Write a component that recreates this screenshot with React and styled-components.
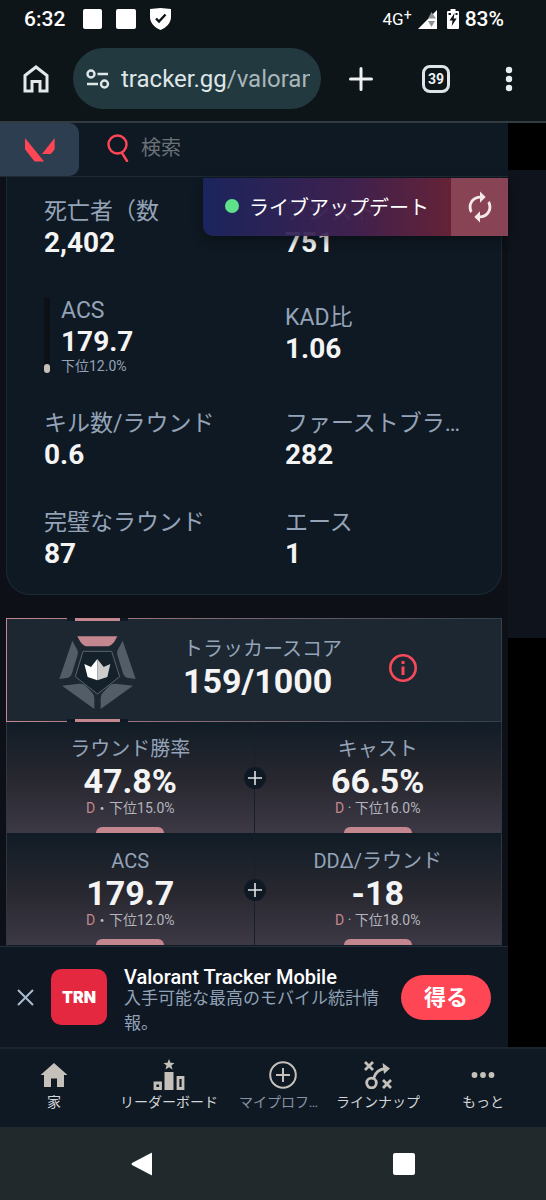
import React from "react";
import styled, { createGlobalStyle } from 'styled-components';
import { MdAutorenew } from 'react-icons/md';

const stats = [
  { label: '死亡者（数', value: '2,402' },
  { label: 'アシスト', value: '751' },
  { label: 'ACS', value: '179.7', rank: '下位12.0%', percent: 12 },
  { label: 'KAD比', value: '1.06' },
  { label: 'キル数/ラウンド', value: '0.6' },
  { label: 'ファーストブラッド', value: '282' },
  { label: '完璧なラウンド', value: '87' },
  { label: 'エース', value: '1' },
];

const scoreRows = [
  [
    { label: 'ラウンド勝率', value: '47.8%', dot: '・', rank: '下位15.0%' },
    { label: 'キャスト', value: '66.5%', dot: ' · ', rank: '下位16.0%' },
  ],
  [
    { label: 'ACS', value: '179.7', dot: '・', rank: '下位12.0%' },
    { label: 'DDΔ/ラウンド', value: '-18', dot: ' · ', rank: '下位18.0%' },
  ],
];

function StatusBar(){
  return(
    <Status>
      <StatusGroup $gap={14}>
        <StatusText>6:32</StatusText>
        <svg width="53" height="20" viewBox="0 0 53 20" fill="#fff">
          <rect x="0" y="0" width="19" height="20" rx="2" />
          <rect x="33" y="0" width="20" height="20" rx="2" />
        </svg>
        <svg width="21" height="22" viewBox="0 0 21 22">
          <path d="M10.5 0L21 1V9C21 15 16 20 10.500 22C5 20 0 15 0 9V1Z" fill="#fff" />
          <path d="M6 10.500L9 13.500L15.500 6.500" fill="none" stroke="#0d1518" strokeWidth="2.400" />
        </svg>
      </StatusGroup>
      <StatusGroup $gap={6}>
        <Network>4G<sup>+</sup></Network>
        <svg width="19" height="19" viewBox="0 0 19 19">
          <path d="M19 0V19H0Z" fill="#fff" />
          <path d="M13.500 2L18 8.500H10Z" fill="#8d9193" />
          <path d="M10 11H17L13.500 17Z" fill="#8d9193" />
        </svg>
        <BatteryIcon width="12" height="20" viewBox="0 0 12 20">
          <path d="M3.500 0H8.500V2H11A1 1 0 0 1 12 3V19A1 1 0 0 1 11 20H1A1 1 0 0 1 0 19V3A1 1 0 0 1 1 2H3.500Z" fill="#fff" />
          <path d="M7.500 4L2.500 11.500H5.500L4.700 17L9.700 9.500H6.700Z" fill="#0d1518" />
          <path d="M1.500 4H4V6H1.500ZM8.500 4H10.500V6H8.500Z" fill="#0d1518" />
        </BatteryIcon>
        <StatusText>83%</StatusText>
      </StatusGroup>
    </Status>
  )
}

function BrowserBar(){
  return(
    <Browser>
      <PlainButton aria-label="ホーム">
        <svg width="26" height="28" viewBox="0 0 26 28" fill="none" stroke="#e3e8ea" strokeWidth="3">
          <path d="M2 10.500L13 2L24 10.500V26H17V16.500H9V26H2Z" />
        </svg>
      </PlainButton>
      <Address>
        <svg width="24" height="20" viewBox="0 0 24 20" fill="none" stroke="#dfe6e8" strokeWidth="2.400">
          <circle cx="5" cy="5" r="3.500" />
          <path d="M11.500 5H22M1 15H12" />
          <circle cx="18.500" cy="15" r="3.500" />
        </svg>
        <Url>tracker.gg<UrlPath>/valorant</UrlPath></Url>
      </Address>
      <PlainButton aria-label="新しいタブ">
        <svg width="24" height="24" viewBox="0 0 24 24" stroke="#eef1f2" strokeWidth="3" strokeLinecap="round">
          <path d="M12 1.500V22.500M1.500 12H22.500" />
        </svg>
      </PlainButton>
      <TabCount>39</TabCount>
      <PlainButton aria-label="メニュー">
        <svg width="8" height="26" viewBox="0 0 8 26" fill="#e9edef">
          <circle cx="4" cy="4" r="3.200" />
          <circle cx="4" cy="13" r="3.200" />
          <circle cx="4" cy="22" r="3.200" />
        </svg>
      </PlainButton>
    </Browser>
  )
}

function SiteHeader(){
  return(
    <Header>
      <GameTab href="#valorant" aria-label="Valorant">
        <svg width="30" height="24" viewBox="0 0 88 70" fill="#ff4655">
          <path d="M0 0L56 69H31Q29 69 27 67L1 34Q0 33 0 31Z" />
          <path d="M87 0V31Q87 33 86 34L77 45Q75 47 73 47H50Z" />
        </svg>
      </GameTab>
      <Search>
        <svg width="22" height="28" viewBox="0 0 22 28" fill="none" stroke="#ff4655" strokeWidth="2.400" strokeLinecap="round">
          <circle cx="10.500" cy="10.500" r="9" />
          <path d="M15 19L20 27" />
        </svg>
        <input type="search" placeholder="検索" aria-label="検索" />
      </Search>
    </Header>
  )
}

function Stat({ stat }){
  return(
    <StatItem>
      {stat.rank && (
        <Track><TrackFill style={{ height: `${stat.percent}%` }} /></Track>
      )}
      <StatBody>
        <StatLabel>{stat.label}</StatLabel>
        <StatValue>{stat.value}</StatValue>
        {stat.rank && <StatRank>{stat.rank}</StatRank>}
      </StatBody>
    </StatItem>
  )
}

function ScoreBadge(){
  return(
    <svg width="77" height="82" viewBox="0 -27 229 246">
      <path d="M54 1H174L165 17Q154 31 142 31H86Q72 31 63 17Z" fill="#c4868f" />
      <g fill="#535d68">
        <path d="M39 14L54 42Q57 48 55 56L38 112Q34 124 22 126L0 129Z" />
        <path d="M190 14L175 42Q172 48 174 56L191 112Q195 124 207 126L229 129Z" />
        <path d="M8 149L60 143Q74 142 82 152L100 172Q105 178 105 186V219Z" />
        <path d="M221 149L169 143Q155 142 147 152L129 172Q124 178 124 186V219Z" />
      </g>
      <path d="M71 46H157L181 122L114.500 174L48 122Z" fill="#14202a" stroke="#596470" strokeWidth="3" />
      <path d="M75 84L95 93L114 69V133L85 123Z" fill="#fff" />
      <path d="M153 84L133 93L114 69V133L144 123Z" fill="#ccc" />
    </svg>
  )
}

function ScorePanel(){
  return(
    <Panel>
      <Notch $top />
      <ScoreBadge />
      <div>
        <TileLabel>トラッカースコア</TileLabel>
        <TileValue>159/1000</TileValue>
      </div>
      <PlainButton aria-label="情報">
        <svg width="28" height="28" viewBox="0 0 28 28" fill="none" stroke="#f8495a">
          <circle cx="14" cy="14" r="12.700" strokeWidth="2.600" />
          <path d="M14 12.500V21M14 7V10" strokeWidth="3" />
        </svg>
      </PlainButton>
      <Notch />
    </Panel>
  )
}

function TileRow({ tiles }){
  return(
    <Tiles>
      {tiles.map((tile)=>(
        <Tile key={tile.label}>
          <TileLabel>{tile.label}</TileLabel>
          <TileValue>{tile.value}</TileValue>
          <TileRank><b>D</b>{tile.dot}{tile.rank}</TileRank>
        </Tile>
      ))}
      <PlusMark>
        <svg width="14" height="14" viewBox="0 0 14 14" stroke="#e2e4e6" strokeWidth="1.600">
          <path d="M7 0V14M0 7H14" />
        </svg>
      </PlusMark>
    </Tiles>
  )
}

function Promo(){
  return(
    <PromoBar>
      <PlainButton aria-label="閉じる">
        <svg width="17" height="17" viewBox="0 0 17 17" stroke="#a9bccd" strokeWidth="2">
          <path d="M1 1L16 16M16 1L1 16" />
        </svg>
      </PlainButton>
      <AppLogo>TRN</AppLogo>
      <PromoText>
        <h2>Valorant Tracker Mobile</h2>
        <p>入手可能な最高のモバイル統計情報。</p>
      </PromoText>
      <GetButton>得る</GetButton>
    </PromoBar>
  )
}

const tabs = [
  {
    label: '家',
    icon: (
      <svg width="28" height="28" viewBox="0 0 28 28" fill="#c5c1ba">
        <path d="M14 2L27.500 14H24V26H17V17.500H11V26H4V14H0.500Z" />
      </svg>
    ),
  },
  {
    label: 'リーダーボード',
    icon: (
      <svg width="32" height="32" viewBox="0 0 32 32">
        <path d="M16 0L17.500 3.800L21.500 4L18.400 6.600L19.500 10.500L16 8.300L12.500 10.500L13.600 6.600L10.500 4L14.500 3.800Z" fill="#c5c1ba" />
        <path d="M11.500 13H20.500V31H11.500Z" fill="#c5c1ba" />
        <path d="M2 24H7.500V29.500H2ZM25 18.500H30V29.500H25Z" fill="none" stroke="#c5c1ba" strokeWidth="2.800" />
      </svg>
    ),
  },
  {
    label: 'マイプロフィール',
    dim: true,
    icon: (
      <svg width="28" height="28" viewBox="0 0 28 28" fill="none" stroke="#c5c1ba" strokeWidth="2">
        <circle cx="14" cy="14" r="12.800" />
        <path d="M14 7V21M7 14H21" />
      </svg>
    ),
  },
  {
    label: 'ラインナップ',
    icon: (
      <svg width="28" height="28" viewBox="0 0 28 28" fill="none" stroke="#c5c1ba" strokeWidth="2.800">
        <path d="M1 1L9 9M9 1L1 9M19 19L27 27M27 19L19 27" />
        <circle cx="7.500" cy="22" r="4.800" />
        <path d="M9.500 17.500C11 12 15 8 22 7.500" />
        <path d="M18.500 2L26 7.500L20 13Z" fill="#c5c1ba" stroke="none" />
      </svg>
    ),
  },
  {
    label: 'もっと',
    icon: (
      <svg width="24" height="28" viewBox="0 0 24 28" fill="#c5c1ba">
        <circle cx="3.500" cy="14" r="2.900" />
        <circle cx="12" cy="14" r="2.900" />
        <circle cx="20.500" cy="14" r="2.900" />
      </svg>
    ),
  },
];

function App(){
  return(
    <Page>
      <GlobalStyle />
      <StatusBar />
      <BrowserBar />
      <Viewport>
        <Site>
          <SiteHeader />
          <Content>
            <LiveUpdate>
              <LiveText>ライブアップデート</LiveText>
              <LiveRefresh aria-label="更新"><MdAutorenew size={34} /></LiveRefresh>
            </LiveUpdate>
            <StatsCard>
              {stats.map((stat)=>(
                <Stat key={stat.label} stat={stat} />
              ))}
            </StatsCard>
            <ScoreCard>
              <ScorePanel />
              {scoreRows.map((row, index)=>(
                <TileRow key={index} tiles={row} />
              ))}
            </ScoreCard>
          </Content>
          <Promo />
        </Site>
      </Viewport>
      <TabBar>
        {tabs.map((tab)=>(
          <TabLink key={tab.label} href="#" $dim={tab.dim}>
            <TabIcon>{tab.icon}</TabIcon>
            <span>{tab.label}</span>
          </TabLink>
        ))}
      </TabBar>
      <SystemNav>
        <PlainButton aria-label="戻る">
          <svg width="22" height="24" viewBox="0 0 22 24" fill="#fff">
            <path d="M20 1Q21 0 21 2V22Q21 24 20 23L1 13Q0 12 1 11Z" />
          </svg>
        </PlainButton>
        <PlainButton aria-label="最近のアプリ">
          <svg width="22" height="22" viewBox="0 0 22 22" fill="#fff">
            <rect width="22" height="22" rx="2" />
          </svg>
        </PlainButton>
      </SystemNav>
    </Page>
  )
}

export default App;

const GlobalStyle = createGlobalStyle`
  *{
    box-sizing: border-box;
  }

  body{
    margin: 0;
    background: #0d1518;
    font-family: Roboto, "Noto Sans CJK JP", sans-serif;
    color: #fff;
  }

  svg{
    display: block;
    flex-shrink: 0;
  }

  h2, p{
    margin: 0;
  }
`

const Page = styled.div`
  display: flex;
  flex-direction: column;
  min-height: 100vh;
`

const PlainButton = styled.button`
  padding: 0;
  border: none;
  background: transparent;
  cursor: pointer;
`

const Status = styled.header`
  display: flex;
  justify-content: space-between;
  align-items: center;
  height: 38px;
  padding: 0 42px 0 24px;
`

const StatusGroup = styled.div`
  display: flex;
  align-items: center;
  gap: ${props => props.$gap}px;
`

const StatusText = styled.span`
  font-size: 21px;
  font-weight: 500;

  &:first-child{
    margin-right: 4px;
  }
`

const Network = styled.span`
  display: flex;
  align-items: flex-start;
  font-size: 17px;
  line-height: 20px;

  sup{
    font-size: 14px;
    line-height: 12px;
  }
`

const BatteryIcon = styled.svg`
  margin-left: 4px;
`

const Browser = styled.div`
  display: flex;
  align-items: center;
  height: 85px;
  padding: 0 33px 2px 23px;
  border-bottom: 2px solid #323b3f;
`

const Address = styled.div`
  display: flex;
  flex: 1;
  align-items: center;
  gap: 11px;
  min-width: 0;
  height: 61px;
  margin: 0 28px 0 24px;
  padding: 0 11px 0 13px;
  border-radius: 31px;
  background: #22393f;
`

const Url = styled.span`
  flex: 1;
  overflow: hidden;
  font-size: 24px;
  line-height: 34px;
  white-space: nowrap;
  color: #dfe6e8;
`

const UrlPath = styled.span`
  color: #a9b6ba;
`

const TabCount = styled.button`
  width: 28px;
  height: 28px;
  margin: 0 55px 0 49px;
  padding: 0;
  border: 3px solid #dfe4ea;
  border-radius: 8px;
  background: transparent;
  font-family: inherit;
  font-size: 14px;
  font-weight: 700;
  color: #eef1f2;
`

/* strip on the right is what shows past the edge of the site */
const Viewport = styled.div`
  flex: 1;
  padding-right: 38px;
  background: linear-gradient(#000 47px, #0f131b 47px, #0f131b 515px, #000 515px);
`

const Site = styled.div`
  background: #0d1117;
`

const Header = styled.div`
  display: flex;
  height: 54px;
  border-bottom: 1px solid #1e2a34;
  background: #0f1923;
`

const GameTab = styled.a`
  display: flex;
  align-items: center;
  justify-content: center;
  width: 79px;
  border-radius: 0 10px 10px 0;
  background: #2d3e51;
`

const Search = styled.label`
  display: flex;
  flex: 1;
  align-items: center;
  gap: 12px;
  padding: 0 12px 4px 28px;

  input{
    flex: 1;
    min-width: 0;
    padding: 0;
    border: none;
    outline: none;
    background: transparent;
    font-family: inherit;
    font-size: 20px;
    color: #fff;
  }

  input::placeholder{
    color: #6a7178;
  }
`

const Content = styled.main`
  position: relative;
  padding: 0 6px;
`

const LiveUpdate = styled.div`
  position: absolute;
  top: 1px;
  right: 0;
  display: flex;
  height: 58px;
  border-radius: 0 0 0 10px;
  overflow: hidden;
  background: linear-gradient(90deg, #1b2560f0, #432150f0 50%, #6b2338f0 82%);
  box-shadow: 0 4px 12px #0006;
`

const LiveText = styled.span`
  display: flex;
  align-items: center;
  padding: 0 22px 2px;
  font-size: 20px;
  color: #fff;

  &::before{
    content: '';
    width: 14px;
    height: 14px;
    margin-right: 10px;
    border-radius: 50%;
    background: #5fe08a;
  }
`

const LiveRefresh = styled.button`
  display: flex;
  align-items: center;
  justify-content: center;
  width: 57px;
  padding: 0;
  border: none;
  background: #884455;
  color: #f5e8ea;
`

const StatsCard = styled.section`
  display: grid;
  grid-template-columns: 1fr 1fr;
  gap: 37px 62px;
  align-items: center;
  padding: 21px 37px 23px;
  border: 1px solid #1c2a35;
  border-top: none;
  border-radius: 0 0 24px 24px;
  background: #0f1923;
`

const StatItem = styled.div`
  display: flex;
  gap: 11px;
  min-width: 0;
`

const StatBody = styled.div`
  min-width: 0;
`

const Track = styled.div`
  display: flex;
  align-items: flex-end;
  width: 6px;
  border-radius: 3px;
  background: #0d1117;
`

const TrackFill = styled.div`
  width: 100%;
  border-radius: 3px;
  background: #c5c1ba;
`

const StatLabel = styled.div`
  overflow: hidden;
  font-size: 23px;
  line-height: 28px;
  white-space: nowrap;
  text-overflow: ellipsis;
  color: #94a3b8;
`

const StatValue = styled.div`
  font-size: 28px;
  font-weight: 700;
  line-height: 34px;
  color: #f4f4f5;
`

const StatRank = styled.div`
  font-size: 14px;
  line-height: 14px;
  color: #94a3b8;
`

const ScoreCard = styled.section`
  margin-top: 23px;
`

const Panel = styled.div`
  position: relative;
  display: flex;
  align-items: center;
  gap: 47px;
  height: 104px;
  padding: 0 0 4px 52px;
  border: 1px solid;
  border-image: linear-gradient(90deg, #c4868f, #7c6670 45%, #33414c) 1;
  background: #1c2732;
`

const Notch = styled.span`
  position: absolute;
  left: 60px;
  ${props => props.$top ? 'top: -1px;' : 'bottom: -1px;'}
  width: 61px;
  height: 3px;
  border: solid #0d1822;
  border-width: 0 8px;
  background: #c4868f;
`

const TileLabel = styled.div`
  font-size: 20px;
  line-height: 26px;
  color: #94a3b8;
`

const TileValue = styled.div`
  font-size: 34px;
  font-weight: 700;
  line-height: 38px;
  color: #f4f4f5;
`

const TileRank = styled.div`
  font-size: 14px;
  line-height: 16px;
  white-space: pre;
  color: #b3b5bc;

  b{
    font-weight: 400;
    color: #c4868f;
  }
`

const Tiles = styled.div`
  position: relative;
  display: grid;
  grid-template-columns: 1fr 1fr;
  border-left: 1px solid #2d3641;
`

const Tile = styled.div`
  display: flex;
  flex-direction: column;
  align-items: center;
  padding-top: 14px;
  border-right: 1px solid #2d3641;
  border-bottom: 1px solid #111b24;
  background: linear-gradient(#111c26, #27272f 50%, #3d3945);

  &:first-child{
    border-right-color: #15202a;
  }

  &::after{
    content: '';
    width: 68px;
    height: 6px;
    margin-top: 11px;
    border-radius: 6px 6px 0 0;
    background: #c4868f;
  }
`

const PlusMark = styled.span`
  position: absolute;
  top: 50%;
  left: 50%;
  display: flex;
  align-items: center;
  justify-content: center;
  width: 22px;
  height: 22px;
  border-radius: 50%;
  background: #0f1923;
  transform: translate(-50%, -50%);
`

const PromoBar = styled.aside`
  display: flex;
  align-items: center;
  height: 101px;
  padding: 0 17px;
  border-top: 1px solid #222f3a;
  background: #0f1722;
`

const AppLogo = styled.span`
  display: flex;
  align-items: center;
  justify-content: center;
  width: 56px;
  height: 56px;
  margin: 0 17px;
  border-radius: 10px;
  background: #e3283f;
  font-family: Inter, Roboto, sans-serif;
  font-size: 16px;
  font-weight: 900;
`

const PromoText = styled.div`
  flex: 1;
  padding-top: 10px;

  h2{
    font-size: 20px;
    font-weight: 500;
    line-height: 18px;
  }

  p{
    font-size: 17px;
    line-height: 25px;
    color: #8fa2b7;
  }
`

const GetButton = styled.button`
  width: 90px;
  height: 45px;
  margin-left: 16px;
  padding: 0 0 4px;
  border: none;
  border-radius: 23px;
  background: #ff4655;
  font-family: inherit;
  font-size: 22px;
  font-weight: 700;
  color: #fff;
`

const TabBar = styled.nav`
  display: grid;
  grid-template-columns: 108fr 122fr 106fr 84fr 126fr;
  height: 80px;
  padding-top: 11px;
  border-top: 2px solid #1a242e;
  background: #0f1923;
`

const TabLink = styled.a`
  display: flex;
  flex-direction: column;
  align-items: center;
  font-size: 14px;
  line-height: 20px;
  text-decoration: none;
  color: ${props => props.$dim ? '#8793a3' : '#d3d5d8'};

  span:last-child{
    max-width: 104px;
    overflow: hidden;
    white-space: nowrap;
    text-overflow: ellipsis;
    ${props => props.$dim && 'max-width: 88px;'}
  }
`

const TabIcon = styled.span`
  display: flex;
  align-items: center;
  height: 30px;
  margin-bottom: 2px;
`

const SystemNav = styled.footer`
  display: flex;
  align-items: center;
  justify-content: space-between;
  height: 73px;
  padding: 0 131px;
  background: #22292d;
`
